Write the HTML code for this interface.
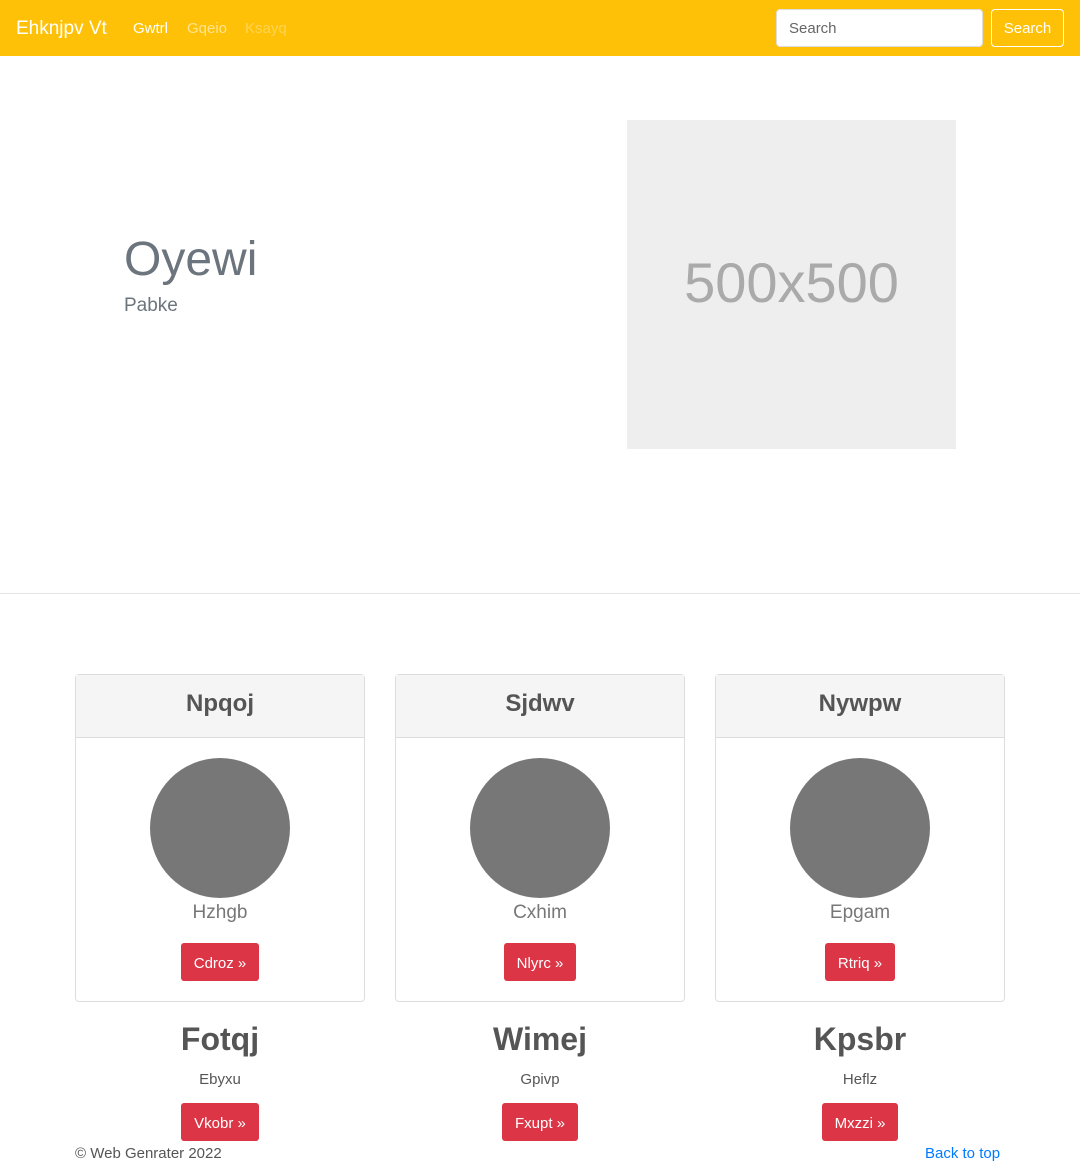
<!DOCTYPE html>
<html><head><meta charset="utf-8"><style>
*{box-sizing:border-box;margin:0;padding:0}
body{width:1080px;height:1166px;overflow:hidden;background:#fff;font-family:"Liberation Sans",sans-serif;color:#555;position:relative}
.nav{position:absolute;left:0;top:0;width:1080px;height:56px;background:#ffc107}
.brand{position:absolute;left:16px;top:18px;font-size:19px;color:#fff}
.nl{position:absolute;top:20px;font-size:15px}
.search{position:absolute;left:776px;top:9px;width:207px;height:38px;background:#fff;border:1px solid #ddd;border-radius:4px;font-size:15px;color:#666;padding:10px 12px}
.sbtn{position:absolute;left:991px;top:9px;width:73px;height:38px;border:1px solid #fff;border-radius:4px;color:#fff;font-size:15px;text-align:center;line-height:38px}
.h1{position:absolute;left:124px;top:232px;font-size:48px;color:#6c757d;font-weight:300}
.sub{position:absolute;left:124px;top:295px;font-size:19px;color:#6c757d;font-weight:300}
.ph{position:absolute;left:627px;top:120px;width:329px;height:329px;background:#eee;color:#aaa;font-size:56px;text-align:center;line-height:325px}
.hr{position:absolute;left:0;top:593px;width:1080px;border-top:1px solid #e5e5e5}
.card{position:absolute;top:674px;width:290px;height:328px;border:1px solid #ddd;border-radius:4px;text-align:center}
.ch{height:63px;background:#f5f5f5;border-bottom:1px solid #ddd;font-size:24px;font-weight:bold;line-height:58px;color:#555}
.circ{width:140px;height:140px;border-radius:50%;background:#777;margin:20px auto 4px}
.nm{font-size:19px;color:#777;font-weight:300}
.btn{display:inline-block;background:#dc3545;color:#fff;border-radius:3px;font-size:15px;padding:0 13px;height:38px;line-height:42px;overflow:hidden}
.col{position:absolute;top:1021px;width:290px;text-align:center}
.col h2{font-size:32px;font-weight:bold;color:#555;height:40px}
.col p{font-size:15px;margin:10px 0 15px}
.foot{position:absolute;top:1145px;font-size:15px}
</style></head><body>
<div class="nav">
<div class="brand">Ehknjpv Vt</div>
<div class="nl" style="left:133px;color:#fff">Gwtrl</div>
<div class="nl" style="left:187px;color:rgba(255,255,255,.55)">Gqeio</div>
<div class="nl" style="left:245px;color:rgba(255,255,255,.3)">Ksayq</div>
<div class="search">Search</div>
<div class="sbtn">Search</div>
</div>
<div class="h1">Oyewi</div>
<div class="sub">Pabke</div>
<div class="ph">500x500</div>
<div class="hr"></div>
<div class="card" style="left:75px"><div class="ch">Npqoj</div><div class="circ"></div><div class="nm">Hzhgb</div><div class="btn" style="margin-top:19px">Cdroz »</div></div>
<div class="card" style="left:395px"><div class="ch">Sjdwv</div><div class="circ"></div><div class="nm">Cxhim</div><div class="btn" style="margin-top:19px">Nlyrc »</div></div>
<div class="card" style="left:715px"><div class="ch">Nywpw</div><div class="circ"></div><div class="nm">Epgam</div><div class="btn" style="margin-top:19px">Rtriq »</div></div>
<div class="col" style="left:75px"><h2>Fotqj</h2><p>Ebyxu</p><div class="btn">Vkobr »</div></div>
<div class="col" style="left:395px"><h2>Wimej</h2><p>Gpivp</p><div class="btn">Fxupt »</div></div>
<div class="col" style="left:715px"><h2>Kpsbr</h2><p>Heflz</p><div class="btn">Mxzzi »</div></div>
<div class="foot" style="left:75px">© Web Genrater 2022</div>
<div class="foot" style="left:925px;color:#007bff">Back to top</div>
</body></html>
